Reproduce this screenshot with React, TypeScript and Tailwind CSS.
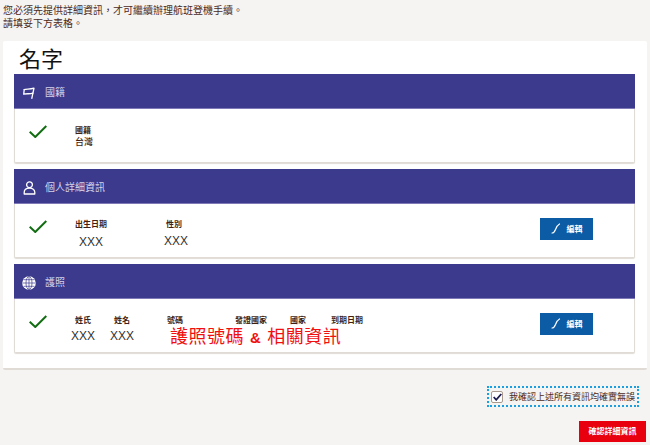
import type {ReactNode} from "react";

const FONT = "[font-family:'Noto_Sans_CJK_TC',Roboto,sans-serif]";

function Field({label, value, width, indent}: {label: string; value?: ReactNode; width: string; indent?: string}) {
    return (
        <div className={`${width} shrink-0`}>
            <div className="text-[8px] leading-[12px] font-bold text-[#3f1f14] whitespace-nowrap">{label}</div>
            {value && (
                <div className={`text-[12px] leading-[16px] text-[#333] whitespace-nowrap [font-family:'Liberation_Sans',sans-serif] ${indent ?? ""}`}>{value}</div>
            )}
        </div>
    );
}

function EditButton() {
    return (
        <button className="flex h-[22px] w-[53px] items-center justify-center gap-[6px] bg-[#0b5ba5] pb-[1px] text-[8px] font-bold text-white">
            <svg width="10" height="11" viewBox="0 0 10 11" fill="none" stroke="white" strokeWidth="1.2" strokeLinecap="round">
                <path d="M1 10c2 0 2.500-1 3.500-3.500S6.500 2 8.500 1" />
            </svg>
            編輯
        </button>
    );
}

function FlagIcon() {
    return (
        <svg width="12" height="12" viewBox="0 0 12 12" fill="none" stroke="white" strokeWidth="1.300" strokeLinejoin="round" strokeLinecap="round">
            <path d="M1.200 2.600C3.500 1.600 6.500 2.700 11 1.200L8.800 11.300" />
            <path d="M1.200 2.600L.7 7.200C3.500 6.200 6.500 7.300 9.900 6.200" />
        </svg>
    );
}

function UserIcon() {
    return (
        <svg width="13" height="14" viewBox="0 0 13 14" fill="none" stroke="white" strokeWidth="1.300" strokeLinejoin="round">
            <circle cx="6.500" cy="3.700" r="2.900" />
            <path d="M1.200 13v-1.500c0-2.800 2.300-4.300 5.300-4.300s5.300 1.500 5.300 4.300V13z" />
        </svg>
    );
}

function GlobeIcon() {
    return (
        <svg width="14" height="14" viewBox="0 0 14 14" fill="white" stroke="#3c3a8c" strokeWidth="0.7">
            <circle cx="7" cy="7" r="6.800" stroke="none" />
            <ellipse cx="7" cy="7" rx="3" ry="6.500" fill="none" />
            <path d="M7 .5v13M.5 7h13M1.500 3.700h11M1.500 10.300h11" fill="none" />
        </svg>
    );
}

function Section({icon, title, children}: {icon: ReactNode; title: string; children: ReactNode}) {
    return (
        <section>
            <div className="flex h-[35px] items-center gap-[9px] border-b border-[#7f79b8] bg-[#3c3a8c] pl-[8px] text-[10px] text-[#d5d4ea]">
                <span className="mt-[3px] flex w-[14px] justify-center">{icon}</span>
                <span>{title}</span>
            </div>
            <div className="relative flex h-[54px] rounded-b-[2px] border-x border-b border-[#e0dbd5] bg-white shadow-[0_1px_1px_#e0dbd5]">
                <svg width="18" height="13" viewBox="0 0 18 13" fill="none" stroke="#126c12" strokeWidth="2" className="ml-[14px] mt-[16px] shrink-0">
                    <path d="M.7 6.800L6.300 12 17.300 1" />
                </svg>
                {children}
            </div>
        </section>
    );
}

export default function App() {
    return (
        <div lang="zh-TW" className={`h-[445px] w-[650px] overflow-hidden bg-[#f5f4f2] ${FONT}`}>
            <div className="px-[3px] pt-[3px] text-[10px] leading-[13px] text-[#4a2a1d] [text-spacing-trim:space-all]">
                <p>您必須先提供詳細資訊，才可繼續辦理航班登機手續。</p>
                <p>請填妥下方表格。</p>
            </div>

            <div className="mx-[3px] mt-[12px] h-[329px] rounded-[2px] border-b-2 border-[#e0dbd5] bg-white px-[11px]">
                <h1 className="h-[33px] pl-[5px] pt-[5px] text-[22px] leading-[28px] text-[#111] [font-family:'Liberation_Serif','Noto_Sans_CJK_TC',serif]">
                    名字
                </h1>
                <div className="flex w-[621px] flex-col gap-[6px]">
                    <Section icon={<FlagIcon />} title="國籍">
                        <div className="ml-[28px] mt-[15px]">
                            <Field width="w-[60px]" label="國籍" />
                            <div className="text-[9px] leading-[12px] font-medium text-[#3f1f14]">台灣</div>
                        </div>
                    </Section>
                    <Section icon={<UserIcon />} title="個人詳細資訊">
                        <div className="ml-[28px] mt-[14px] flex">
                            <Field width="w-[91px]" label="出生日期" value="XXX" indent="pl-[4px] pt-[4px]" />
                            <Field width="w-[90px]" label="性別" value="XXX" indent="-ml-[2px] pt-[3px]" />
                        </div>
                        <div className="absolute right-[41px] top-[14px]">
                            <EditButton />
                        </div>
                    </Section>
                    <Section icon={<GlobeIcon />} title="護照">
                        <div className="ml-[28px] mt-[15px] flex">
                            <Field width="w-[39px]" label="姓氏" value="XXX" indent="-ml-[4px] pt-[2px]" />
                            <Field width="w-[53px]" label="姓名" value="XXX" indent="-ml-[4px] pt-[2px]" />
                            <Field width="w-[68px]" label="號碼" />
                            <Field width="w-[55px]" label="發證國家" />
                            <Field width="w-[41px]" label="國家" />
                            <Field width="w-[40px]" label="到期日期" />
                        </div>
                        <div className="absolute left-[155px] top-[26px] whitespace-nowrap text-[18px] leading-[24px] tracking-[0.5px] text-[#f01010] [font-family:'Liberation_Serif','Noto_Sans_CJK_TC',serif]">
                            護照號碼<b className="mx-[6px] text-[15px] [font-family:'Liberation_Sans',sans-serif]">&amp;</b>相關資訊
                        </div>
                        <div className="absolute right-[41px] top-[14px]">
                            <EditButton />
                        </div>
                    </Section>
                </div>
            </div>

            <div className="mt-[16px] flex justify-end pr-[11px]">
                <label className="flex h-[21px] w-[152px] items-center gap-[6px] border-2 border-dotted border-[#1aa0e0] pl-[2px] text-[9px] text-[#4a2a1d]">
                    <span className="flex size-[12px] shrink-0 items-center justify-center rounded-[2px] border border-[#a89a8e] bg-white">
                        <svg width="9" height="8" viewBox="0 0 9 8" fill="none" stroke="#1c1c50" strokeWidth="1.800">
                            <path d="M.7 4l2.500 2.800L8.300 1" />
                        </svg>
                    </span>
                    <span className="whitespace-nowrap">我確認上述所有資訊均確實無誤</span>
                </label>
            </div>

            <div className="mt-[14px] flex justify-end pr-[4px]">
                <button className="h-[21px] w-[67px] bg-[#e9000f] pb-[1px] text-[8px] font-bold text-white">確認詳細資訊</button>
            </div>
        </div>
    );
}
